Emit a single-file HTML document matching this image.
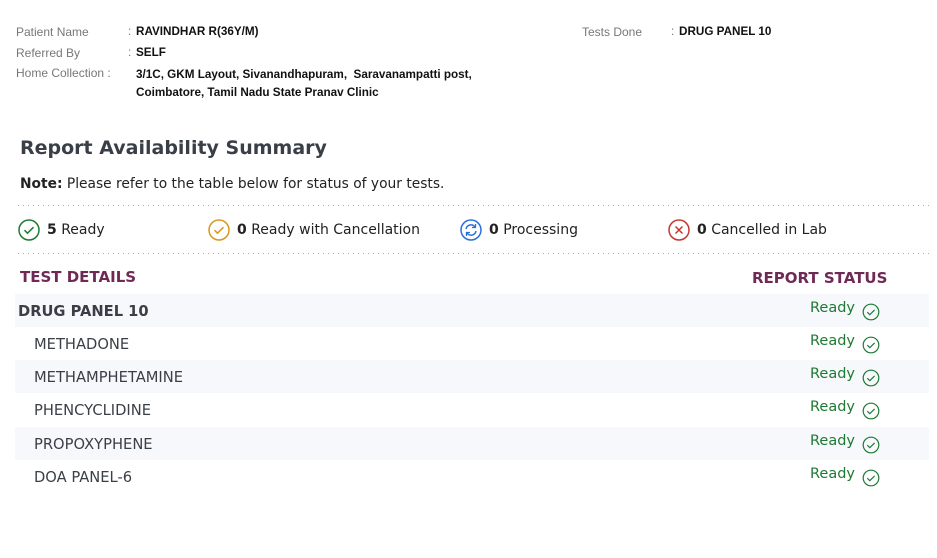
<!DOCTYPE html>
<html><head><style>
body{margin:0;width:937px;height:558px;background:#fff;position:relative;font-family:"DejaVu Sans",Verdana,sans-serif;overflow:hidden}
.a{position:absolute;white-space:nowrap}
.l{font-family:"Liberation Sans",Arial,sans-serif;font-size:12px;color:#777}
.v{font-family:"Liberation Sans",Arial,sans-serif;font-size:11.7px;color:#111;font-weight:bold}
.dot{position:absolute;left:18px;width:911px;height:1px;background:repeating-linear-gradient(90deg,#aaa 0 1px,transparent 1px 5px)}
.row{position:absolute;left:15px;width:914px;height:33px}
.bg{background:#f7f8fc}
.name{position:absolute;left:19px;top:9px;font-size:14.7px;color:#3a3f47}
.st{position:absolute;left:795px;top:6px;font-size:14.5px;color:#1d7a33}
.st svg{position:absolute;left:52px;top:3px}
.sum{font-size:14px;color:#222}
.c{font-weight:normal;color:#777;display:inline-block;width:8px}
</style></head><body>
<div class="a l" style="left:16px;top:25px">Patient Name</div>
<div class="a v" style="left:128px;top:25px"><span class="c">:</span>RAVINDHAR R(36Y/M)</div>
<div class="a l" style="left:16px;top:46px">Referred By</div>
<div class="a v" style="left:128px;top:46px"><span class="c">:</span>SELF</div>
<div class="a l" style="left:16px;top:66px">Home Collection :</div>
<div class="a v" style="left:136px;top:66px;line-height:18px">3/1C, GKM Layout, Sivanandhapuram,&nbsp; Saravanampatti post,<br>Coimbatore, Tamil Nadu State Pranav Clinic</div>
<div class="a l" style="left:582px;top:25px">Tests Done</div>
<div class="a v" style="left:671px;top:25px"><span class="c">:</span>DRUG PANEL 10</div>

<div class="a" style="left:20px;top:137px;font-size:19px;font-weight:bold;color:#3a3f47">Report Availability Summary</div>
<div class="a" style="left:20px;top:176px;font-size:13.8px;color:#222"><b>Note:</b> Please refer to the table below for status of your tests.</div>
<div class="dot" style="top:205px"></div>
<div class="dot" style="top:253px"></div>

<svg class="a" style="left:18px;top:219px" width="22" height="22" viewBox="0 0 22 22"><circle cx="11" cy="11" r="10" fill="none" stroke="#1d7a33" stroke-width="1.5"/><path d="M6.5 11.2l3 3 6-6" fill="none" stroke="#1d7a33" stroke-width="1.5"/></svg>
<div class="a sum" style="left:47px;top:222px"><b>5</b> Ready</div>
<svg class="a" style="left:208px;top:219px" width="22" height="22" viewBox="0 0 22 22"><circle cx="11" cy="11" r="10" fill="none" stroke="#d9981f" stroke-width="1.5"/><path d="M6.5 11.2l3 3 6-6" fill="none" stroke="#d9981f" stroke-width="1.5"/></svg>
<div class="a sum" style="left:237px;top:222px"><b>0</b> Ready with Cancellation</div>
<svg class="a" style="left:460px;top:219px" width="22" height="22" viewBox="0 0 22 22"><circle cx="11" cy="11" r="10" fill="none" stroke="#2a6fdb" stroke-width="1.5"/><path d="M6 10a5 5 0 0 1 9-2M16 12a5 5 0 0 1-9 2" fill="none" stroke="#2a6fdb" stroke-width="1.5"/><path d="M15.5 5v3.5h-3.5M6.5 17v-3.5h3.5" fill="none" stroke="#2a6fdb" stroke-width="1.3"/></svg>
<div class="a sum" style="left:489px;top:222px"><b>0</b> Processing</div>
<svg class="a" style="left:668px;top:219px" width="22" height="22" viewBox="0 0 22 22"><circle cx="11" cy="11" r="10" fill="none" stroke="#c8372d" stroke-width="1.5"/><path d="M7.5 7.5l7 7M14.5 7.5l-7 7" fill="none" stroke="#c8372d" stroke-width="1.5"/></svg>
<div class="a sum" style="left:697px;top:222px"><b>0</b> Cancelled in Lab</div>

<div class="a" style="left:20px;top:268px;font-size:15px;font-weight:bold;color:#6e2a55">TEST DETAILS</div>
<div class="a" style="left:752px;top:269px;font-size:15px;font-weight:bold;color:#6e2a55">REPORT STATUS</div>

<div class="row bg" style="top:294px"><div class="name" style="left:3px;font-weight:bold">DRUG PANEL 10</div><div class="st">Ready<svg width="18" height="18" viewBox="0 0 18 18"><circle cx="9" cy="9" r="7.8" fill="none" stroke="#1d7a33" stroke-width="1.2"/><path d="M5.3 9.2l2.5 2.5 4.8-4.8" fill="none" stroke="#1d7a33" stroke-width="1.2"/></svg></div></div>
<div class="row" style="top:327px"><div class="name">METHADONE</div><div class="st">Ready<svg width="18" height="18" viewBox="0 0 18 18"><circle cx="9" cy="9" r="7.8" fill="none" stroke="#1d7a33" stroke-width="1.2"/><path d="M5.3 9.2l2.5 2.5 4.8-4.8" fill="none" stroke="#1d7a33" stroke-width="1.2"/></svg></div></div>
<div class="row bg" style="top:360px"><div class="name">METHAMPHETAMINE</div><div class="st">Ready<svg width="18" height="18" viewBox="0 0 18 18"><circle cx="9" cy="9" r="7.8" fill="none" stroke="#1d7a33" stroke-width="1.2"/><path d="M5.3 9.2l2.5 2.5 4.8-4.8" fill="none" stroke="#1d7a33" stroke-width="1.2"/></svg></div></div>
<div class="row" style="top:393px"><div class="name">PHENCYCLIDINE</div><div class="st">Ready<svg width="18" height="18" viewBox="0 0 18 18"><circle cx="9" cy="9" r="7.8" fill="none" stroke="#1d7a33" stroke-width="1.2"/><path d="M5.3 9.2l2.5 2.5 4.8-4.8" fill="none" stroke="#1d7a33" stroke-width="1.2"/></svg></div></div>
<div class="row bg" style="top:427px"><div class="name">PROPOXYPHENE</div><div class="st">Ready<svg width="18" height="18" viewBox="0 0 18 18"><circle cx="9" cy="9" r="7.8" fill="none" stroke="#1d7a33" stroke-width="1.2"/><path d="M5.3 9.2l2.5 2.5 4.8-4.8" fill="none" stroke="#1d7a33" stroke-width="1.2"/></svg></div></div>
<div class="row" style="top:460px"><div class="name">DOA PANEL-6</div><div class="st">Ready<svg width="18" height="18" viewBox="0 0 18 18"><circle cx="9" cy="9" r="7.8" fill="none" stroke="#1d7a33" stroke-width="1.2"/><path d="M5.3 9.2l2.5 2.5 4.8-4.8" fill="none" stroke="#1d7a33" stroke-width="1.2"/></svg></div></div>
</body></html>
